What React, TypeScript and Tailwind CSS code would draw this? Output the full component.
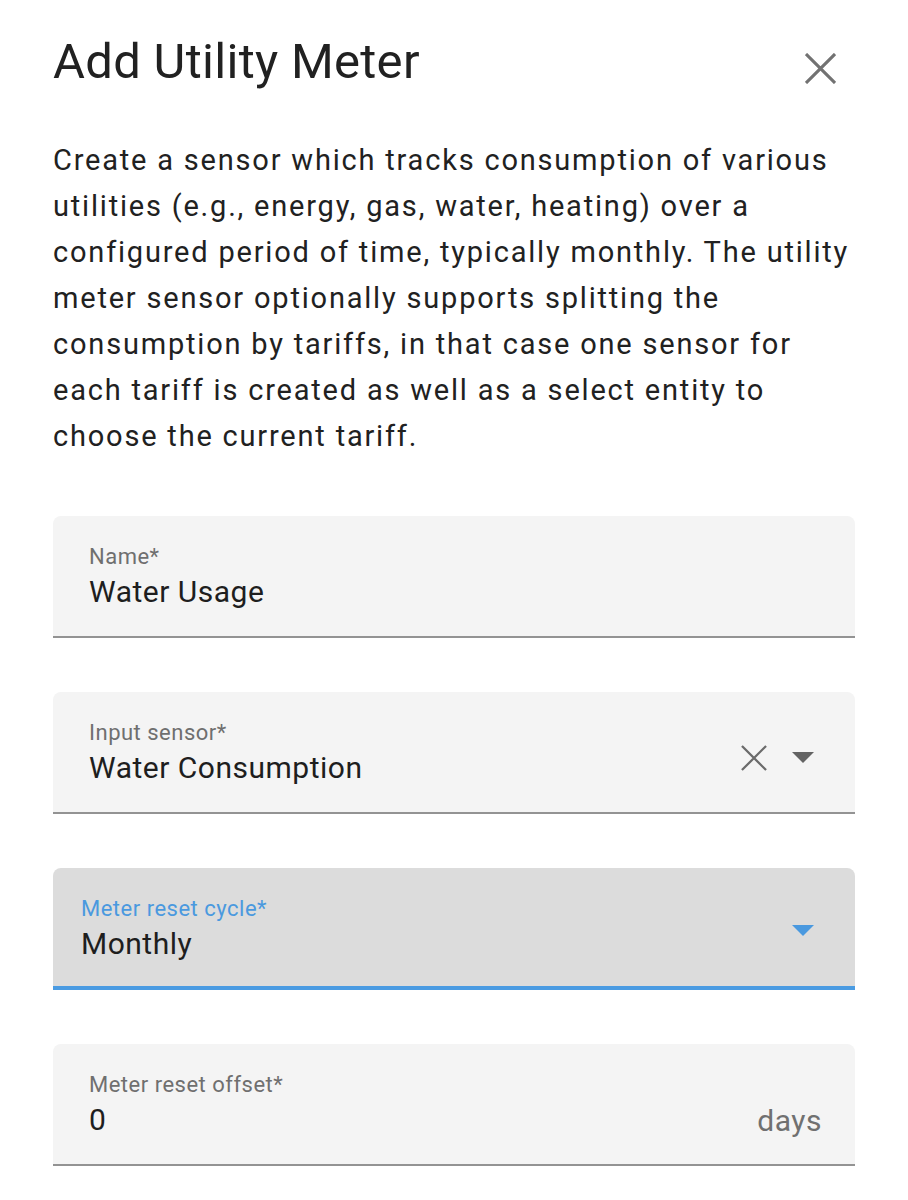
type FieldProps = {
  label: string;
  value: string;
  focused?: boolean;
  suffix?: string;
  clearable?: boolean;
  dropdown?: boolean;
};

function Cross({ className, stroke }: { className: string; stroke: number }) {
  return (
    <svg viewBox="0 0 30 30" className={className} fill="none">
      <path d="M2 2 L28 28 M28 2 L2 28" stroke="currentColor" strokeWidth={stroke} strokeLinecap="square" />
    </svg>
  );
}

function Caret({ className }: { className: string }) {
  return (
    <svg viewBox="0 0 22 11" className={className}>
      <path d="M0 0 L22 0 L11 11 Z" fill="currentColor" />
    </svg>
  );
}

function Field({ label, value, focused, suffix, clearable, dropdown }: FieldProps) {
  return (
    <div
      className={`relative h-[122px] rounded-t-[8px] flex items-start ${
        focused ? "bg-[#dcdcdc] pl-[28px]" : "bg-[#f4f4f4] pl-[36px]"
      } pr-[36px]`}
    >
      <div className="flex-1 min-w-0 pt-[28px]">
        <div
          className={`text-[22px] leading-[26px] tracking-[0.5px] ${
            focused ? "text-[#4a99df]" : "text-[#6f6f6f]"
          }`}
        >
          {label}
        </div>
        <div className="mt-[3px] text-[30px] leading-[38px] tracking-[0.5px] text-[#1e1e1e]">{value}</div>
      </div>
      {suffix && (
        <span className="pt-[58px] mr-[-3px] text-[30px] leading-[38px] tracking-[0.5px] text-[#707070]">
          {suffix}
        </span>
      )}
      {(clearable || dropdown) && (
        <div className={`self-center flex items-center ${focused ? "mt-[3px]" : "mt-[9px]"} mr-[5px]`}>
          {clearable && <Cross stroke={2.6} className="w-[26px] h-[26px] text-[#6b6b6b] mr-[25px]" />}
          {dropdown && (
            <Caret className={`w-[22px] h-[11px] ${focused ? "text-[#4a99df]" : "text-[#636363]"}`} />
          )}
        </div>
      )}
      <div
        className={`absolute left-0 right-0 bottom-0 ${
          focused ? "h-[4px] bg-[#4a9be2]" : "h-[2px] bg-[#939393]"
        }`}
      />
    </div>
  );
}

export default function App() {
  return (
    <div
      className="min-h-[1200px] bg-white px-[53px] pt-[34px]"
      style={{ fontFamily: "Roboto, 'Noto Sans', sans-serif" }}
    >
      <div className="flex items-start justify-between">
        <h1 className="text-[49px] leading-[56px] tracking-[0.3px] text-[#212121] font-normal">Add Utility Meter</h1>
        <Cross stroke={3} className="w-[31px] h-[31px] text-[#727272] mt-[19px] mr-[19px]" />
      </div>

      <p className="mt-[47px] whitespace-nowrap text-[29px] leading-[46px] tracking-[1.8px] text-[#212121]">
        Create a sensor which tracks consumption of various
        <br />
        utilities (e.g., energy, gas, water, heating) over a
        <br />
        configured period of time, typically monthly. The utility
        <br />
        meter sensor optionally supports splitting the
        <br />
        consumption by tariffs, in that case one sensor for
        <br />
        each tariff is created as well as a select entity to
        <br />
        choose the current tariff.
      </p>

      <div className="mt-[57px] flex flex-col gap-[54px]">
        <Field label="Name*" value="Water Usage" />
        <Field label="Input sensor*" value="Water Consumption" clearable dropdown />
        <Field label="Meter reset cycle*" value="Monthly" focused dropdown />
        <Field label="Meter reset offset*" value="0" suffix="days" />
      </div>
    </div>
  );
}
